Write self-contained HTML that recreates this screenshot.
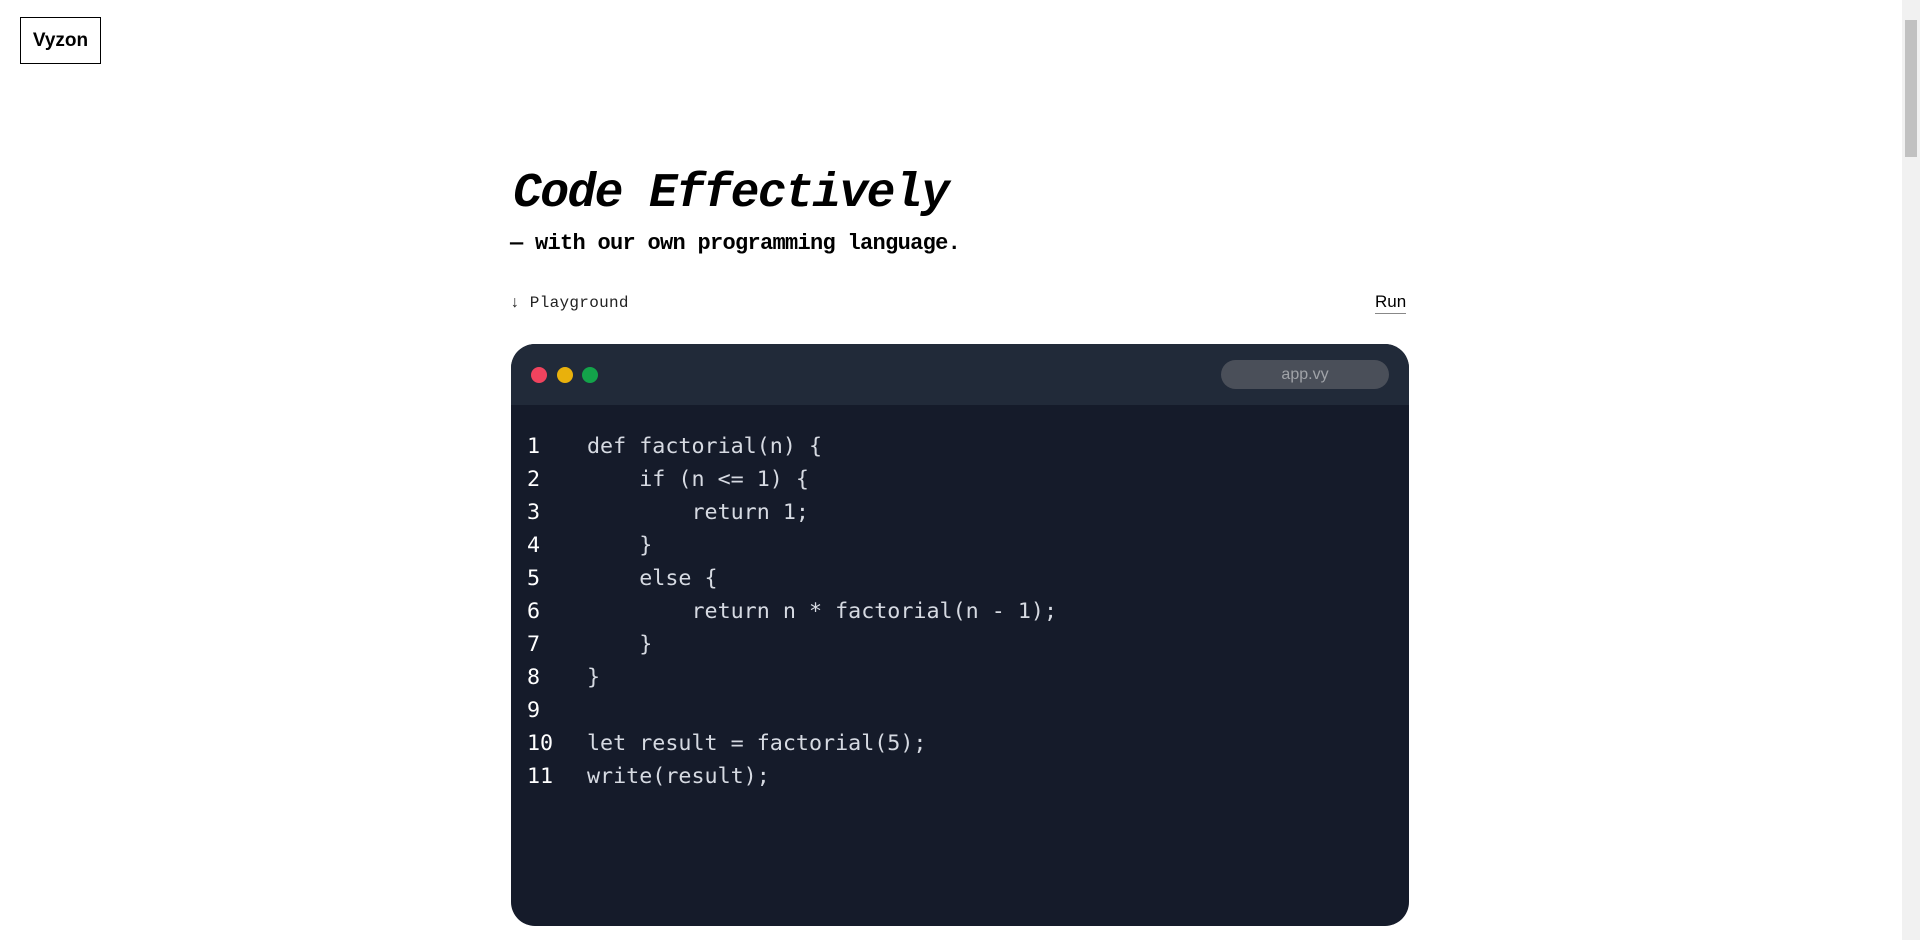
<!DOCTYPE html>
<html><head><meta charset="utf-8"><style>
*{margin:0;padding:0;box-sizing:border-box}
html,body{width:1920px;height:940px;overflow:hidden;background:#fff}
body{position:relative;font-family:"Liberation Mono","DejaVu Sans Mono",monospace;color:#000}
.logo{position:absolute;left:20px;top:17px;width:81px;height:47px;border:1.5px solid #000;font-family:"Liberation Sans",sans-serif;font-weight:bold;font-size:19px;line-height:46px;text-align:center}
h1{position:absolute;left:513px;top:167px;font-size:48px;font-style:italic;font-weight:bold;letter-spacing:-1.6px;white-space:nowrap}
.sub{position:absolute;left:510px;top:231px;font-size:22px;font-weight:bold;letter-spacing:-0.7px;white-space:nowrap}
.pg{position:absolute;left:510px;top:294px;font-size:16px;color:#222;white-space:nowrap;letter-spacing:0.3px}
.run{position:absolute;left:1375px;top:292px;font-family:"Liberation Sans",sans-serif;font-size:17px;border-bottom:1.5px solid #888;padding-bottom:1px}
.ed{position:absolute;left:511px;top:344px;width:898px;height:582px;background:#151b2a;border-radius:24px;overflow:hidden}
.hd{height:61px;background:#212a39;position:relative}
.dot{position:absolute;top:23px;width:16px;height:16px;border-radius:50%}
.pill{position:absolute;left:710px;top:16px;width:168px;height:29px;border-radius:15px;background:#4a4f59;color:#a0a3a8;font-family:"Liberation Sans",sans-serif;font-size:16px;line-height:29px;text-align:center}
.code{position:absolute;top:86px;left:0;font-family:"DejaVu Sans Mono",monospace;font-size:21.7px;line-height:33px;white-space:pre}
.ln{position:absolute;left:16px;color:#fff}
.tx{position:absolute;left:76px;color:#d6dae2}
.sb{position:absolute;left:1902px;top:0;width:18px;height:940px;background:#f1f1f1}
.th{position:absolute;left:1905px;top:20px;width:12px;height:137px;background:#c1c1c1}
</style></head><body>
<div class="logo">Vyzon</div>
<h1>Code Effectively</h1>
<div class="sub">— with our own programming language.</div>
<div class="pg">↓ Playground</div>
<div class="run">Run</div>
<div class="ed">
<div class="hd">
<div class="dot" style="left:20px;background:#f0435e"></div>
<div class="dot" style="left:46px;background:#e9b10c"></div>
<div class="dot" style="left:71px;background:#13a34a"></div>
<div class="pill">app.vy</div>
</div>
<div class="code"><div class="ln">1
2
3
4
5
6
7
8
9
10
11</div><div class="tx">def factorial(n) {
    if (n &lt;= 1) {
        return 1;
    }
    else {
        return n * factorial(n - 1);
    }
}

let result = factorial(5);
write(result);</div></div>
</div>
<div class="sb"></div><div class="th"></div>
</body></html>
